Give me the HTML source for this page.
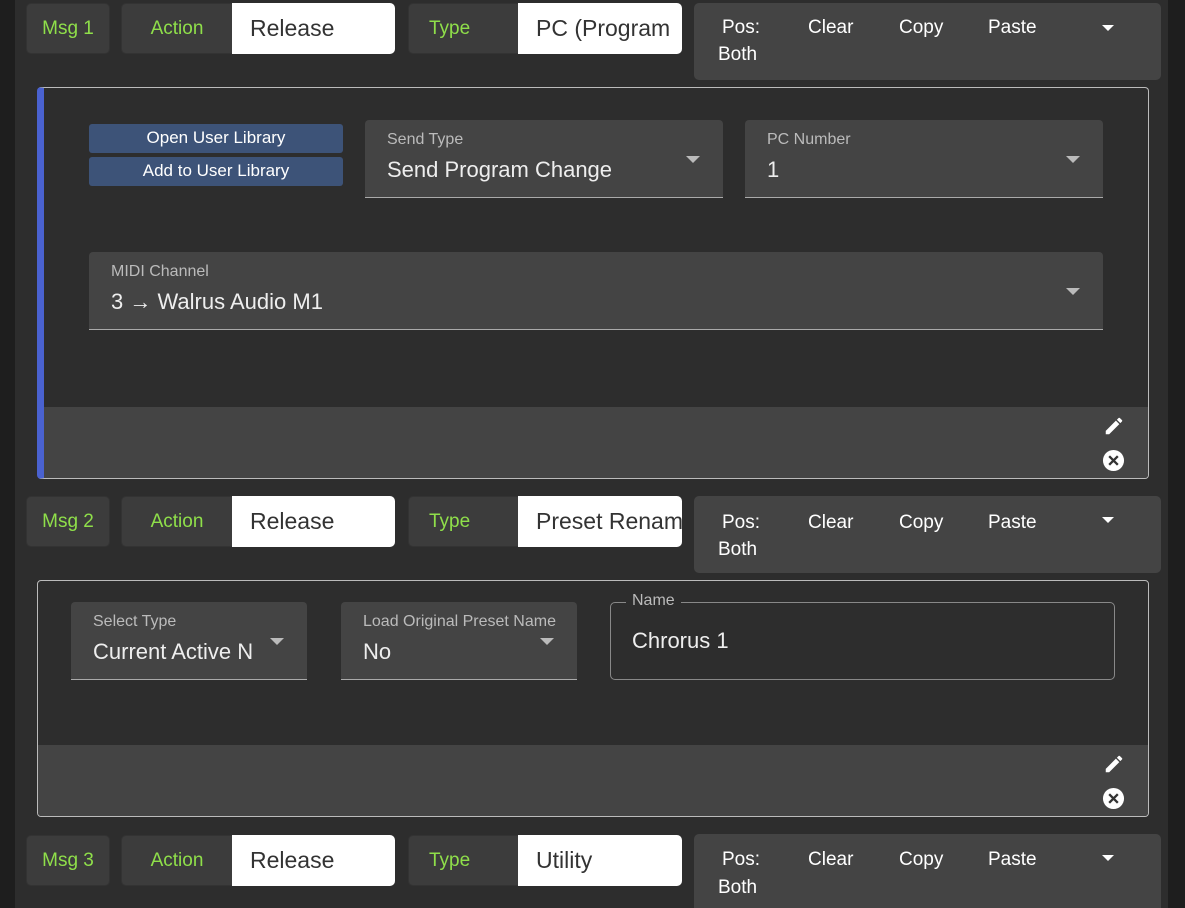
<!DOCTYPE html>
<html><head><meta charset="utf-8"><style>
*{box-sizing:border-box;margin:0;padding:0}
body{width:1185px;height:908px;overflow:hidden;background:#2d2d2d;font-family:"Liberation Sans",sans-serif;position:relative}
.a{position:absolute}
.ls{left:0;top:0;width:15px;height:908px;background:#1e1e1e}
.rs{left:1168px;top:0;width:17px;height:908px;background:#1e1e1e}
.box{background:#3c3c3c;border-radius:5px;color:#8fdf4a;font-size:19px;display:flex;align-items:center;justify-content:center;border:1px solid #333}
.tp{justify-content:flex-start;padding-left:20px}
.wh{background:#fff;border-radius:0 5px 5px 0;color:#333;font-size:23px;display:flex;align-items:center;padding-left:18px;white-space:nowrap;overflow:hidden}
.menu{background:#444;border-radius:5px;color:#fff;font-size:19px}
.menu span{position:absolute}
.panel{border:1px solid #bbb;border-radius:4px;overflow:hidden}
.foot{background:#444}
.sel{background:#444;border-radius:4px 4px 0 0;border-bottom:1px solid #aaa}
.sel .l{position:absolute;left:22px;top:11px;font-size:16px;color:#bbb;white-space:nowrap}
.sel .v{position:absolute;left:22px;top:37px;font-size:22px;color:#eee;white-space:nowrap;overflow:hidden}
.arr{position:absolute;width:0;height:0;border-left:7px solid transparent;border-right:7px solid transparent;border-top:7px solid #bbb}
.btn{background:#3d5378;border-radius:3px;color:#fff;font-size:17px;text-align:center;line-height:28px}
</style></head><body>
<div class="a ls"></div><div class="a rs"></div>

<!-- Row 1 -->
<div class="a box" style="left:26px;top:3px;width:84px;height:51px">Msg 1</div>
<div class="a box" style="left:121px;top:3px;width:112px;height:51px;border-radius:5px 0 0 5px">Action</div>
<div class="a wh" style="left:232px;top:3px;width:163px;height:51px">Release</div>
<div class="a box tp" style="left:408px;top:3px;width:111px;height:51px;border-radius:5px 0 0 5px">Type</div>
<div class="a wh" style="left:518px;top:3px;width:164px;height:51px">PC (Program</div>
<div class="a menu" style="left:694px;top:3px;width:467px;height:77px">
<span style="left:28px;top:14px">Pos:</span><span style="left:24px;top:41px">Both</span>
<span style="left:114px;top:14px">Clear</span><span style="left:205px;top:14px">Copy</span><span style="left:294px;top:14px">Paste</span>
<div class="arr" style="left:408px;top:22px;border-top-color:#fff;border-left-width:6px;border-right-width:6px;border-top-width:6px"></div></div>

<!-- Panel 1 -->
<div class="a panel" style="left:37px;top:87px;width:1112px;height:392px;border-left:7px solid #4a62d0">
 <div class="a foot" style="left:0;top:319px;width:1110px;height:72px"></div>
</div>
<div class="a btn" style="left:89px;top:124px;width:254px;height:29px">Open User Library</div>
<div class="a btn" style="left:89px;top:157px;width:254px;height:29px">Add to User Library</div>
<div class="a sel" style="left:365px;top:120px;width:358px;height:78px"><div class="l">Send Type</div><div class="v">Send Program Change</div><div class="arr" style="left:321px;top:36px"></div></div>
<div class="a sel" style="left:745px;top:120px;width:358px;height:78px"><div class="l">PC Number</div><div class="v">1</div><div class="arr" style="left:321px;top:36px"></div></div>
<div class="a sel" style="left:89px;top:252px;width:1014px;height:78px"><div class="l">MIDI Channel</div><div class="v">3 → Walrus Audio M1</div><div class="arr" style="left:977px;top:36px"></div></div>

<!-- Row 2 -->
<div class="a box" style="left:26px;top:496px;width:84px;height:51px">Msg 2</div>
<div class="a box" style="left:121px;top:496px;width:112px;height:51px;border-radius:5px 0 0 5px">Action</div>
<div class="a wh" style="left:232px;top:496px;width:163px;height:51px">Release</div>
<div class="a box tp" style="left:408px;top:496px;width:111px;height:51px;border-radius:5px 0 0 5px">Type</div>
<div class="a wh" style="left:518px;top:496px;width:164px;height:51px">Preset Rename</div>
<div class="a menu" style="left:694px;top:496px;width:467px;height:77px">
<span style="left:28px;top:16px">Pos:</span><span style="left:24px;top:43px">Both</span>
<span style="left:114px;top:16px">Clear</span><span style="left:205px;top:16px">Copy</span><span style="left:294px;top:16px">Paste</span>
<div class="arr" style="left:408px;top:21px;border-top-color:#fff;border-left-width:6px;border-right-width:6px;border-top-width:6px"></div></div>

<!-- Panel 2 -->
<div class="a panel" style="left:37px;top:580px;width:1112px;height:237px">
 <div class="a foot" style="left:0;top:164px;width:1110px;height:72px"></div>
</div>
<div class="a sel" style="left:71px;top:602px;width:236px;height:78px"><div class="l">Select Type</div><div class="v" style="width:170px">Current Active N</div><div class="arr" style="left:199px;top:36px"></div></div>
<div class="a sel" style="left:341px;top:602px;width:236px;height:78px"><div class="l">Load Original Preset Name</div><div class="v">No</div><div class="arr" style="left:199px;top:36px"></div></div>
<div class="a" style="left:610px;top:602px;width:505px;height:78px;border:1px solid #888;border-radius:5px"></div>
<div class="a" style="left:626px;top:592px;padding:0 6px;background:#2d2d2d;color:#bbb;font-size:16px">Name</div>
<div class="a" style="left:632px;top:628px;color:#eee;font-size:22px">Chrorus 1</div>

<!-- Icons -->
<svg class="a" style="left:1103px;top:415px" width="22" height="22" viewBox="0 0 24 24"><path fill="#fff" d="M3 17.25V21h3.75L17.81 9.94l-3.75-3.75L3 17.25zM20.71 7.04a1 1 0 0 0 0-1.41l-2.34-2.34a1 1 0 0 0-1.41 0l-1.83 1.83 3.75 3.75 1.83-1.83z"/></svg>
<svg class="a" style="left:1102px;top:449px" width="23" height="23" viewBox="0 0 24 24"><circle cx="12" cy="12" r="11" fill="#fff"/><path d="M7.5 7.5l9 9M16.5 7.5l-9 9" stroke="#333" stroke-width="2.4"/></svg>
<svg class="a" style="left:1103px;top:753px" width="22" height="22" viewBox="0 0 24 24"><path fill="#fff" d="M3 17.25V21h3.75L17.81 9.94l-3.75-3.75L3 17.25zM20.71 7.04a1 1 0 0 0 0-1.41l-2.34-2.34a1 1 0 0 0-1.41 0l-1.83 1.83 3.75 3.75 1.83-1.83z"/></svg>
<svg class="a" style="left:1102px;top:787px" width="23" height="23" viewBox="0 0 24 24"><circle cx="12" cy="12" r="11" fill="#fff"/><path d="M7.5 7.5l9 9M16.5 7.5l-9 9" stroke="#333" stroke-width="2.4"/></svg>

<!-- Row 3 -->
<div class="a box" style="left:26px;top:835px;width:84px;height:51px">Msg 3</div>
<div class="a box" style="left:121px;top:835px;width:112px;height:51px;border-radius:5px 0 0 5px">Action</div>
<div class="a wh" style="left:232px;top:835px;width:163px;height:51px">Release</div>
<div class="a box tp" style="left:408px;top:835px;width:111px;height:51px;border-radius:5px 0 0 5px">Type</div>
<div class="a wh" style="left:518px;top:835px;width:164px;height:51px">Utility</div>
<div class="a menu" style="left:694px;top:834px;width:467px;height:74px;border-radius:5px 5px 0 0">
<span style="left:28px;top:15px">Pos:</span><span style="left:24px;top:43px">Both</span>
<span style="left:114px;top:15px">Clear</span><span style="left:205px;top:15px">Copy</span><span style="left:294px;top:15px">Paste</span>
<div class="arr" style="left:408px;top:21px;border-top-color:#fff;border-left-width:6px;border-right-width:6px;border-top-width:6px"></div></div>
</body></html>
